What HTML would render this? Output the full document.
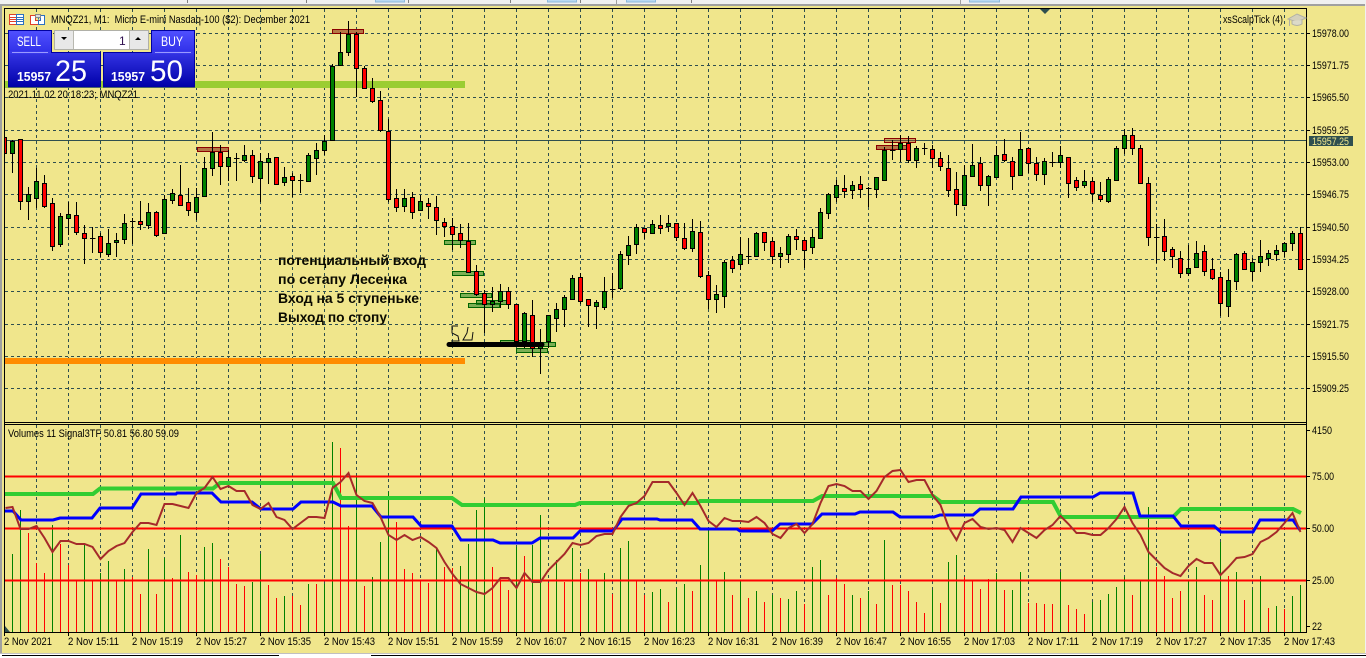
<!DOCTYPE html>
<html lang="ru">
<head>
<meta charset="utf-8">
<title>MNQZ21, M1</title>
<style>
html,body{margin:0;padding:0;width:1366px;height:658px;overflow:hidden;background:#f0e68c}
svg{display:block;position:absolute;left:0;top:0}
text{font-family:"Liberation Sans",sans-serif;font-size:11px;fill:#000}
.b{font-size:14px;font-weight:bold;fill:#0a0a00}
.w{fill:#fff}
</style>
</head>
<body>
<svg width="1366" height="658" viewBox="0 0 1366 658" xmlns="http://www.w3.org/2000/svg">
<defs>
<linearGradient id="tab" x1="0" y1="0" x2="0" y2="1"><stop offset="0" stop-color="#5050ff"/><stop offset="1" stop-color="#3030e8"/></linearGradient>
<linearGradient id="box" x1="0" y1="0" x2="0" y2="1"><stop offset="0" stop-color="#3434e4"/><stop offset="1" stop-color="#0000a8"/></linearGradient>
</defs>
<!-- frame -->
<rect width="1366" height="658" fill="#f0e68c"/>
<rect width="1366" height="4" fill="#f0f0f0"/>
<rect y="4" width="1366" height="2" fill="#a0a0a0"/>
<rect x="0" y="4" width="2" height="650" fill="#a0a0a0"/>
<rect x="1365" y="4" width="1" height="650" fill="#f0f0f0"/>
<g fill="#b8d8f2" stroke="#8cb8dc" stroke-width="1">
<rect x="375.5" y="-1" width="29" height="3"/><rect x="547.5" y="-1" width="29" height="3"/><rect x="626.5" y="-1" width="29" height="3"/><rect x="969.5" y="-1" width="30" height="3"/>
</g>
<path d="M187.5 0V3M306.5 0V3M408.5 0V3M510.5 0V3M580.5 0V3M691.5 0V3" stroke="#808080"/>
<path d="M616.5 0V4M960.5 0V4" stroke="#a0a0a0"/>
<rect y="653" width="1366" height="5" fill="#fff"/>
<rect y="653" width="1366" height="1" fill="#c0c0c0"/>
<rect x="2" y="655" width="277" height="1" fill="#000"/>
<rect x="371" y="655" width="995" height="1" fill="#000"/>

<!-- grid -->
<path fill="none" stroke="#2f4f4f" stroke-width="1" stroke-dasharray="3 3" d="M5 33.5H1306M5 65.5H1306M5 97.5H1306M5 130.5H1306M5 162.5H1306M5 194.5H1306M5 227.5H1306M5 259.5H1306M5 291.5H1306M5 324.5H1306M5 356.5H1306M5 388.5H1306
M36.5 9V422M68.5 9V422M100.5 9V422M132.5 9V422M164.5 9V422M196.5 9V422M228.5 9V422M260.5 9V422M292.5 9V422M324.5 9V422M356.5 9V422M388.5 9V422M420.5 9V422M452.5 9V422M484.5 9V422M516.5 9V422M548.5 9V422M580.5 9V422M612.5 9V422M644.5 9V422M676.5 9V422M708.5 9V422M740.5 9V422M772.5 9V422M804.5 9V422M836.5 9V422M868.5 9V422M900.5 9V422M932.5 9V422M964.5 9V422M996.5 9V422M1028.5 9V422M1060.5 9V422M1092.5 9V422M1124.5 9V422M1156.5 9V422M1188.5 9V422M1220.5 9V422M1252.5 9V422M1284.5 9V422
M36.5 425V632M68.5 425V632M100.5 425V632M132.5 425V632M164.5 425V632M196.5 425V632M228.5 425V632M260.5 425V632M292.5 425V632M324.5 425V632M356.5 425V632M388.5 425V632M420.5 425V632M452.5 425V632M484.5 425V632M516.5 425V632M548.5 425V632M580.5 425V632M612.5 425V632M644.5 425V632M676.5 425V632M708.5 425V632M740.5 425V632M772.5 425V632M804.5 425V632M836.5 425V632M868.5 425V632M900.5 425V632M932.5 425V632M964.5 425V632M996.5 425V632M1028.5 425V632M1060.5 425V632M1092.5 425V632M1124.5 425V632M1156.5 425V632M1188.5 425V632M1220.5 425V632M1252.5 425V632M1284.5 425V632"/>
<rect x="5" y="140" width="1301" height="1" fill="#2f4f4f"/>

<!-- object bars -->
<rect x="5" y="81" width="460" height="7" fill="#9acd32"/>
<rect x="5" y="358" width="460" height="6" fill="#ff8c00"/>

<!-- object rects -->
<g shape-rendering="crispEdges">
<g fill="#a0522d" fill-opacity=".75" stroke="#8b0000">
<rect x="197.5" y="147.5" width="31" height="4"/><rect x="332.5" y="29.5" width="31" height="4"/><rect x="876.5" y="145.5" width="31" height="4"/>
</g>
<rect x="884.5" y="138.5" width="31" height="4" fill="#a0522d" fill-opacity=".45" stroke="#8b0000"/>
<g fill="#2e8b2e" fill-opacity=".6" stroke="#006400">
<rect x="444.5" y="240.5" width="31" height="4"/><rect x="452.5" y="271.5" width="31" height="4"/><rect x="460.5" y="293.5" width="31" height="4"/><rect x="476.5" y="300.5" width="31" height="4"/><rect x="468.5" y="303.5" width="31" height="4"/><rect x="500.5" y="340.5" width="31" height="4"/><rect x="524.5" y="342.5" width="31" height="4"/><rect x="516.5" y="348.5" width="31" height="4"/>
</g>
</g>

<!-- wicks -->
<path transform="translate(.5 0)" stroke="#000" fill="none" d="M12 140V173M20 139V210M28 187V220M36 168V208M44 175V208M52 198V251M60 213V247M68 202V235M76 202V235M84 225V264M92 227V253M100 233V257M108 229V257M116 233V257M124 214V244M132 218V244M140 201V230M148 203V229M156 211V237M164 195V234M172 189V204M180 165V206M188 188V216M196 188V220M204 157V196M212 132V176M220 145V185M228 150V181M236 153V181M244 145V162M252 150V183M260 153V202M268 153V184M276 157V184M284 167V186M292 173V197M300 174V193M308 153V182M316 143V175M324 135V155M332 64V140M340 32V66M348 21V56M356 32V97M364 66V89M372 78V103M380 91V132M388 119V202M396 189V212M404 189V212M412 192V219M420 195V211M428 198V219M436 196V235M444 218V237M452 218V250M460 224V248M468 223V272M476 265V296M484 290V333M492 287V312M500 284V308M508 287V309M516 304V343M524 312V348M532 300V357M540 329V374M548 315V348M556 303V332M564 295V327M572 275V300M580 273V304M588 299V327M596 300V329M604 277V310M612 273V298M620 251V290M628 236V265M636 224V254M644 228V239M652 220V234M660 215V234M668 215V232M676 223V241M684 223V250M692 219V252M700 221V278M708 271V309M716 285V313M724 260V308M732 256V273M740 237V270M748 238V264M756 232V257M764 232V251M772 237V264M780 247V268M788 234V263M796 229V250M804 237V268M812 229V254M820 208V238M828 193V219M836 180V202M844 175V198M852 181V199M860 176V198M868 187V207M876 177V198M884 147V180M892 140V160M900 135V162M908 136V163M916 146V168M924 143V155M932 145V168M940 152V171M948 155V197M956 172V216M964 165V206M972 144V176M980 157V191M988 175V206M996 146V178M1004 139V162M1012 157V190M1020 132V176M1028 147V173M1036 157V181M1044 158V185M1052 152V167M1060 146V168M1068 157V198M1076 177V191M1084 170V188M1092 177V202M1100 182V202M1108 177V203M1116 146V180M1124 129V154M1132 128V155M1140 145V184M1148 177V246M1156 224V263M1164 219V261M1172 247V268M1180 251V278M1188 245V276M1196 241V267M1204 245V276M1212 258V280M1220 272V316M1228 269V317M1236 253V290M1244 251V269M1252 258V281M1260 240V272M1268 250V266M1276 245V261M1284 242V257M1292 231V251M1300 227V270"/>
<!-- doji -->
<path transform="translate(.5 .5)" stroke="#000" fill="none" d="M89.500 238H95M129.500 221H135M233.500 158H239M297.500 180H303M609.500 289H615M745.500 256H751M865.500 188H871M889.500 150H895M921.500 148H927M1049.500 162H1055M1153.500 237H1159"/>
<!-- red bodies -->
<path transform="translate(.5 .5)" fill="#f00" stroke="#000" d="M18 139h4V201h-4zM42 183h4V206h-4zM50 203h4V246h-4zM74 215h4V232h-4zM82 233h4V238h-4zM98 236h4V252h-4zM138 221h4V224h-4zM154 212h4V235h-4zM178 195h4V205h-4zM186 202h4V210h-4zM218 152h4V166h-4zM250 155h4V176h-4zM274 157h4V184h-4zM290 176h4V180h-4zM354 34h4V68h-4zM362 68h4V88h-4zM370 88h4V101h-4zM378 100h4V130h-4zM386 131h4V199h-4zM394 198h4V207h-4zM410 197h4V212h-4zM426 203h4V206h-4zM434 207h4V220h-4zM442 222h4V226h-4zM450 226h4V234h-4zM458 233h4V240h-4zM466 241h4V272h-4zM474 271h4V294h-4zM482 293h4V304h-4zM506 291h4V304h-4zM514 304h4V341h-4zM530 315h4V348h-4zM578 277h4V301h-4zM586 299h4V305h-4zM642 228h4V232h-4zM658 225h4V228h-4zM674 223h4V237h-4zM682 238h4V248h-4zM698 232h4V276h-4zM706 275h4V299h-4zM730 260h4V268h-4zM762 232h4V242h-4zM770 241h4V256h-4zM794 236h4V239h-4zM802 240h4V250h-4zM842 188h4V191h-4zM858 184h4V189h-4zM906 143h4V160h-4zM930 149h4V158h-4zM938 158h4V166h-4zM946 168h4V190h-4zM954 189h4V204h-4zM978 163h4V185h-4zM1002 154h4V160h-4zM1010 161h4V176h-4zM1026 148h4V163h-4zM1034 163h4V174h-4zM1066 157h4V183h-4zM1074 180h4V187h-4zM1090 181h4V193h-4zM1098 195h4V199h-4zM1130 135h4V148h-4zM1138 148h4V183h-4zM1146 183h4V237h-4zM1162 236h4V251h-4zM1170 249h4V256h-4zM1178 258h4V273h-4zM1202 251h4V271h-4zM1210 269h4V278h-4zM1218 277h4V303h-4zM1242 253h4V269h-4zM1298 233h4V269h-4z"/>
<!-- green bodies -->
<path transform="translate(.5 .5)" fill="#008000" stroke="#000" d="M10 141h4V153h-4zM26 194h4V201h-4zM34 181h4V198h-4zM58 216h4V244h-4zM66 214h4V218h-4zM106 243h4V254h-4zM114 240h4V242h-4zM122 223h4V239h-4zM146 212h4V225h-4zM162 199h4V233h-4zM170 193h4V200h-4zM194 197h4V212h-4zM202 168h4V196h-4zM210 152h4V168h-4zM226 157h4V166h-4zM242 155h4V160h-4zM258 161h4V178h-4zM266 158h4V162h-4zM282 177h4V182h-4zM306 155h4V181h-4zM314 150h4V158h-4zM322 141h4V150h-4zM330 66h4V140h-4zM338 52h4V65h-4zM346 34h4V52h-4zM402 198h4V206h-4zM418 201h4V210h-4zM490 301h4V304h-4zM498 291h4V301h-4zM522 313h4V341h-4zM538 345h4V348h-4zM546 315h4V341h-4zM554 309h4V318h-4zM562 297h4V309h-4zM570 278h4V299h-4zM594 302h4V306h-4zM602 291h4V307h-4zM618 254h4V288h-4zM626 245h4V255h-4zM634 227h4V244h-4zM650 224h4V233h-4zM666 223h4V226h-4zM690 231h4V248h-4zM714 294h4V299h-4zM722 262h4V296h-4zM738 254h4V264h-4zM754 233h4V256h-4zM778 253h4V256h-4zM786 236h4V254h-4zM810 237h4V247h-4zM818 212h4V238h-4zM826 194h4V213h-4zM834 185h4V197h-4zM850 185h4V190h-4zM874 177h4V189h-4zM882 150h4V180h-4zM898 143h4V149h-4zM914 148h4V160h-4zM962 175h4V205h-4zM970 165h4V176h-4zM986 176h4V185h-4zM994 155h4V177h-4zM1018 149h4V175h-4zM1042 161h4V174h-4zM1058 155h4V162h-4zM1082 181h4V185h-4zM1106 179h4V201h-4zM1114 148h4V180h-4zM1122 135h4V148h-4zM1186 268h4V273h-4zM1194 253h4V267h-4zM1226 280h4V306h-4zM1234 254h4V281h-4zM1250 262h4V271h-4zM1258 256h4V262h-4zM1266 253h4V258h-4zM1274 250h4V254h-4zM1282 243h4V251h-4zM1290 233h4V243h-4z"/>
<path d="M5 137.500H6.500V153.500H5" fill="#f00" stroke="#000"/>

<!-- black stop line + scribble -->
<path d="M449 344.500H542" stroke="#000" stroke-width="5" stroke-linecap="round"/>
<path d="M458 326L452 326 452 333 458 336 459 341 451 341M468 327L467 333 463 340 472 340 473 332" fill="none" stroke="#111" stroke-width="1"/>

<!-- volumes -->
<path transform="translate(.5 0)" stroke="#008000" fill="none" d="M12 554V632M20 510V632M52 525V632M84 544V632M100 573V632M108 561V632M124 569V632M148 549V632M164 558V632M180 535V632M204 547V632M212 543V632M252 582V632M260 554V632M284 596V632M308 584V632M324 584V632M332 442V632M356 475V632M372 577V632M380 542V632M388 492V632M436 549V632M460 566V632M468 544V632M476 510V632M484 498V632M516 547V632M532 545V632M540 515V632M556 560V632M572 548V632M588 569V632M604 573V632M620 548V632M628 541V632M652 592V632M660 589V632M676 588V632M684 584V632M700 565V632M708 530V632M724 572V632M740 580V632M756 591V632M772 595V632M788 599V632M796 591V632M812 567V632M820 560V632M852 595V632M868 591V632M884 540V632M932 590V632M948 562V632M956 555V632M996 573V632M1012 590V632M1020 572V632M1060 572V632M1092 602V632M1100 600V632M1108 594V632M1116 587V632M1124 577V632M1140 581V632M1148 507V632M1188 580V632M1196 567V632M1220 542V632M1236 572V632M1252 590V632M1260 576V632M1276 606V632M1292 596V632M1300 585V632"/>
<path transform="translate(.5 0)" stroke="#f00" fill="none" d="M28 533V632M36 563V632M44 573V632M60 544V632M68 565V632M76 581V632M92 580V632M116 580V632M132 577V632M140 594V632M156 594V632M172 578V632M188 572V632M196 575V632M220 559V632M228 567V632M236 584V632M244 586V632M268 585V632M276 598V632M292 596V632M300 605V632M316 584V632M340 448V632M348 526V632M364 586V632M396 522V632M404 569V632M412 573V632M420 580V632M428 583V632M444 567V632M452 568V632M492 567V632M500 580V632M508 590V632M524 556V632M548 583V632M564 582V632M580 573V632M596 580V632M612 594V632M636 580V632M644 595V632M668 602V632M692 591V632M716 580V632M732 595V632M748 598V632M764 602V632M780 598V632M804 604V632M828 595V632M836 578V632M844 584V632M860 598V632M876 604V632M892 585V632M900 585V632M908 591V632M916 602V632M924 613V632M940 603V632M964 577V632M972 581V632M980 589V632M988 579V632M1004 590V632M1028 603V632M1036 603V632M1044 604V632M1052 604V632M1068 605V632M1076 609V632M1084 614V632M1132 595V632M1156 567V632M1164 576V632M1172 598V632M1180 591V632M1204 595V632M1212 600V632M1228 576V632M1244 600V632M1268 608V632M1284 609V632"/>

<!-- levels -->
<path d="M5 476.500H1306M5 528.500H1306M5 580.500H1306" stroke="#f00" stroke-width="2" fill="none"/>

<!-- signal lines -->
<polyline fill="none" stroke="#32cd32" stroke-width="4" points="5,494 93,494 100,488.500 213,488.500 220,483 333,483 341,498 452,498 462,505 575,505 580,503 697,503 700,501 813,501 822,496 933,496 941,502 1053,502 1061,517 1173,517 1181,509 1293,509 1301,513"/>
<polyline fill="none" stroke="#00f" stroke-width="3" points="5,511 13,511 21,520 53,520 60,518 92,518 100,508 132,508 141,494 176,494 177,493 212,493 221,502 252,502 261,509 293,509 301,502 333,502 341,506 372,506 381,517 413,517 421,526 452,526 461,540 493,540 500,543 532,543 540,538 573,538 580,531 613,531 622,519 657,519 660,520 692,520 700,529 737,529 740,531 772,531 780,524 812,524 822,514 855,514 860,512 893,512 900,517 934,517 940,515 973,515 980,509 1013,509 1021,497 1093,497 1100,493 1133,493 1140,516 1173,516 1181,526 1214,526 1221,532 1253,532 1260,520 1293,520 1300,530"/>
<polyline transform="translate(.5 0)" fill="none" stroke="#a52a2a" stroke-width="2" points="5,508 12,507 20,529 28,529 36,526 44,538 52,552 60,541 68,541 76,544 84,544 92,547 100,559 108,551 116,546 124,543 132,532 140,523 148,523 156,525 164,504 172,504 180,506 188,508 196,493 204,488 212,477 220,489 228,486 236,491 244,491 252,505 260,509 268,503 276,517 284,520 292,529 300,523 308,517 316,517 324,518 332,488 340,482 348,473 356,495 364,501 372,503 380,517 388,535 396,540 404,535 412,540 420,537 428,542 436,548 444,562 452,574 460,584 468,588 476,592 484,594 492,588 500,578 508,578 516,588 524,573 532,582 540,582 548,570 556,562 564,554 572,543 580,545 588,543 596,536 604,534 612,534 620,517 628,506 636,503 644,496 652,482 660,482 668,482 676,493 684,505 692,493 700,506 708,521 716,527 724,518 732,521 740,521 748,522 756,517 764,523 772,534 780,538 788,528 796,524 804,533 812,524 820,503 828,486 836,484 844,486 852,491 860,491 868,499 876,491 884,477 892,471 900,470 908,482 916,480 924,480 932,495 940,505 948,527 956,540 964,523 972,519 980,527 988,529 996,528 1004,530 1012,542 1020,528 1028,533 1036,538 1044,530 1052,525 1060,516 1068,524 1076,533 1084,533 1092,535 1100,535 1108,528 1116,519 1124,507 1132,523 1140,535 1148,552 1156,560 1164,568 1172,573 1180,576 1188,566 1196,559 1204,563 1212,563 1220,575 1228,567 1236,558 1244,557 1252,554 1260,542 1268,538 1276,532 1284,523 1292,513 1300,532"/>

<!-- borders -->
<g fill="#000">
<rect x="4" y="8" width="1303" height="1"/>
<rect x="4" y="422" width="1303" height="1"/>
<rect x="4" y="424" width="1303" height="1"/>
<rect x="4" y="632" width="1303" height="1"/>
<rect x="4" y="8" width="1" height="628"/>
<rect x="1306" y="8" width="1" height="625"/>
</g>
<path stroke="#000" fill="none" d="M1307 33.500H1310M1307 65.500H1310M1307 97.500H1310M1307 130.500H1310M1307 162.500H1310M1307 194.500H1310M1307 227.500H1310M1307 259.500H1310M1307 291.500H1310M1307 324.500H1310M1307 356.500H1310M1307 388.500H1310M1307 430.500H1310M1307 476.500H1310M1307 528.500H1310M1307 580.500H1310M1307 626.500H1310
M68.500 633V636M132.500 633V636M196.500 633V636M260.500 633V636M324.500 633V636M388.500 633V636M452.500 633V636M516.500 633V636M580.500 633V636M644.500 633V636M708.500 633V636M772.500 633V636M836.500 633V636M900.500 633V636M964.500 633V636M1028.500 633V636M1092.500 633V636M1156.500 633V636M1220.500 633V636M1284.500 633V636"/>
<path d="M1040 9H1050L1045 14zM5 626V632H10z" fill="#2f4f4f"/>

<!-- price axis -->
<g>
<text x="1312" y="37" textLength="37" lengthAdjust="spacingAndGlyphs">15978.00</text>
<text x="1312" y="69" textLength="37" lengthAdjust="spacingAndGlyphs">15971.75</text>
<text x="1312" y="101" textLength="37" lengthAdjust="spacingAndGlyphs">15965.50</text>
<text x="1312" y="134" textLength="37" lengthAdjust="spacingAndGlyphs">15959.25</text>
<text x="1312" y="166" textLength="37" lengthAdjust="spacingAndGlyphs">15953.00</text>
<text x="1312" y="198" textLength="37" lengthAdjust="spacingAndGlyphs">15946.75</text>
<text x="1312" y="231" textLength="37" lengthAdjust="spacingAndGlyphs">15940.50</text>
<text x="1312" y="263" textLength="37" lengthAdjust="spacingAndGlyphs">15934.25</text>
<text x="1312" y="295" textLength="37" lengthAdjust="spacingAndGlyphs">15928.00</text>
<text x="1312" y="328" textLength="37" lengthAdjust="spacingAndGlyphs">15921.75</text>
<text x="1312" y="360" textLength="37" lengthAdjust="spacingAndGlyphs">15915.50</text>
<text x="1312" y="392" textLength="37" lengthAdjust="spacingAndGlyphs">15909.25</text>
<text x="1312" y="434" textLength="20" lengthAdjust="spacingAndGlyphs">4150</text>
<text x="1312" y="480" textLength="22" lengthAdjust="spacingAndGlyphs">75.00</text>
<text x="1312" y="532" textLength="22" lengthAdjust="spacingAndGlyphs">50.00</text>
<text x="1312" y="584" textLength="22" lengthAdjust="spacingAndGlyphs">25.00</text>
<text x="1312" y="630" textLength="10" lengthAdjust="spacingAndGlyphs">22</text>
</g>
<rect x="1309" y="136" width="44" height="10" fill="#2f4f4f"/>
<text x="1312" y="145" textLength="37" lengthAdjust="spacingAndGlyphs" style="fill:#f0e68c">15957.25</text>

<!-- time axis -->
<g>
<text x="4" y="645" textLength="48" lengthAdjust="spacingAndGlyphs">2 Nov 2021</text>
<text x="68" y="645" textLength="51" lengthAdjust="spacingAndGlyphs">2 Nov 15:11</text>
<text x="132" y="645" textLength="51" lengthAdjust="spacingAndGlyphs">2 Nov 15:19</text>
<text x="196" y="645" textLength="51" lengthAdjust="spacingAndGlyphs">2 Nov 15:27</text>
<text x="260" y="645" textLength="51" lengthAdjust="spacingAndGlyphs">2 Nov 15:35</text>
<text x="324" y="645" textLength="51" lengthAdjust="spacingAndGlyphs">2 Nov 15:43</text>
<text x="388" y="645" textLength="51" lengthAdjust="spacingAndGlyphs">2 Nov 15:51</text>
<text x="452" y="645" textLength="51" lengthAdjust="spacingAndGlyphs">2 Nov 15:59</text>
<text x="516" y="645" textLength="51" lengthAdjust="spacingAndGlyphs">2 Nov 16:07</text>
<text x="580" y="645" textLength="51" lengthAdjust="spacingAndGlyphs">2 Nov 16:15</text>
<text x="644" y="645" textLength="51" lengthAdjust="spacingAndGlyphs">2 Nov 16:23</text>
<text x="708" y="645" textLength="51" lengthAdjust="spacingAndGlyphs">2 Nov 16:31</text>
<text x="772" y="645" textLength="51" lengthAdjust="spacingAndGlyphs">2 Nov 16:39</text>
<text x="836" y="645" textLength="51" lengthAdjust="spacingAndGlyphs">2 Nov 16:47</text>
<text x="900" y="645" textLength="51" lengthAdjust="spacingAndGlyphs">2 Nov 16:55</text>
<text x="964" y="645" textLength="51" lengthAdjust="spacingAndGlyphs">2 Nov 17:03</text>
<text x="1028" y="645" textLength="51" lengthAdjust="spacingAndGlyphs">2 Nov 17:11</text>
<text x="1092" y="645" textLength="51" lengthAdjust="spacingAndGlyphs">2 Nov 17:19</text>
<text x="1156" y="645" textLength="51" lengthAdjust="spacingAndGlyphs">2 Nov 17:27</text>
<text x="1220" y="645" textLength="51" lengthAdjust="spacingAndGlyphs">2 Nov 17:35</text>
<text x="1284" y="645" textLength="51" lengthAdjust="spacingAndGlyphs">2 Nov 17:43</text>
</g>

<!-- labels -->
<text x="51" y="23" textLength="259" lengthAdjust="spacingAndGlyphs" xml:space="preserve">MNQZ21, M1:  Micro E-mini Nasdaq-100 ($2): December 2021</text>
<text x="8" y="98" textLength="130" lengthAdjust="spacingAndGlyphs">2021.11.02 20:18:23; MNQZ21</text>
<text x="8" y="437" textLength="171" lengthAdjust="spacingAndGlyphs">Volumes 11 Signal3TF 50.81 56.80 59.09</text>
<text x="1223" y="23" textLength="60" lengthAdjust="spacingAndGlyphs">xsScalpTick (4)</text>

<!-- annotation -->
<text class="b" x="278" y="265" textLength="148" lengthAdjust="spacingAndGlyphs">потенциальный вход</text>
<text class="b" x="278" y="284" textLength="129" lengthAdjust="spacingAndGlyphs">по сетапу Лесенка</text>
<text class="b" x="278" y="303" textLength="141" lengthAdjust="spacingAndGlyphs">Вход на 5 ступеньке</text>
<text class="b" x="278" y="322" textLength="109" lengthAdjust="spacingAndGlyphs">Выход по стопу</text>

<!-- header icons -->
<g shape-rendering="crispEdges">
<rect x="9.500" y="14.500" width="7" height="10" fill="#fff" stroke="#e0402a"/>
<rect x="16.500" y="14.500" width="7" height="10" fill="#fff" stroke="#2a70c0"/>
<path d="M10 17.500H16M10 19.500H16M10 21.500H16" stroke="#e0402a"/>
<path d="M17 17.500H23M17 19.500H23M17 21.500H23" stroke="#2a70c0"/>
<path d="M30.500 15.500H35.500V20.500H38.500V24.500H30.500z" fill="#fff" stroke="#e0402a"/>
<path d="M38.500 19.500V15.500H44.500V24.500H38.500V20.500H40.500V15.500" fill="#fff" stroke="#2a70c0"/>
<rect x="35.500" y="14.500" width="5" height="3" fill="#ddd" stroke="#888"/>
</g>
<!-- cap icon -->
<path d="M1288 19L1297 14 1306 18 1297 22z" fill="#d4d0bc" stroke="#b0b0a4"/>
<path d="M1292 21V24Q1297 27 1302 24V20" fill="#dcdac8" stroke="#b0b0a4"/>
<path d="M1289.500 20V26" stroke="#b0b0a4" fill="none"/>

<!-- trade panel -->
<g shape-rendering="crispEdges">
<rect x="8.500" y="30.500" width="43" height="22" fill="url(#tab)" stroke="#0000a0"/>
<rect x="151.500" y="30.500" width="43" height="22" fill="url(#tab)" stroke="#0000a0"/>
<rect x="8.500" y="52.500" width="92" height="34.500" fill="url(#box)" stroke="#0000a0"/>
<rect x="103.500" y="52.500" width="91" height="34.500" fill="url(#box)" stroke="#0000a0"/>
<rect x="9" y="51" width="42" height="3" fill="#3838ea"/>
<rect x="152" y="51" width="42" height="3" fill="#3838ea"/>
<rect x="12" y="52" width="36" height="1" fill="#9a9aff"/>
<rect x="155" y="52" width="36" height="1" fill="#9a9aff"/>
<rect x="54.500" y="30.500" width="94" height="19" fill="#e8e8e8" stroke="#b0b0a8"/>
<rect x="74" y="31" width="55" height="18" fill="#fff"/>
<path d="M73.500 31V49M129.500 31V49" stroke="#b8b8b0" fill="none"/>
</g>
<path d="M61 37H67L64 40zM135 40H141L138 37z" fill="#000"/>
<text x="119" y="45" style="font-size:12px;fill:#301050">1</text>
<text class="w" x="17" y="46" textLength="24" lengthAdjust="spacingAndGlyphs" style="font-size:14px">SELL</text>
<text class="w" x="161" y="46" textLength="22" lengthAdjust="spacingAndGlyphs" style="font-size:14px">BUY</text>
<text class="w" x="17" y="81" textLength="34" lengthAdjust="spacingAndGlyphs" style="font-size:13px;font-weight:bold">15957</text>
<text class="w" x="111" y="81" textLength="34" lengthAdjust="spacingAndGlyphs" style="font-size:13px;font-weight:bold">15957</text>
<text class="w" x="55" y="81" textLength="32" lengthAdjust="spacingAndGlyphs" style="font-size:30px">25</text>
<text class="w" x="150" y="81" textLength="33" lengthAdjust="spacingAndGlyphs" style="font-size:30px">50</text>
</svg>
</body>
</html>
